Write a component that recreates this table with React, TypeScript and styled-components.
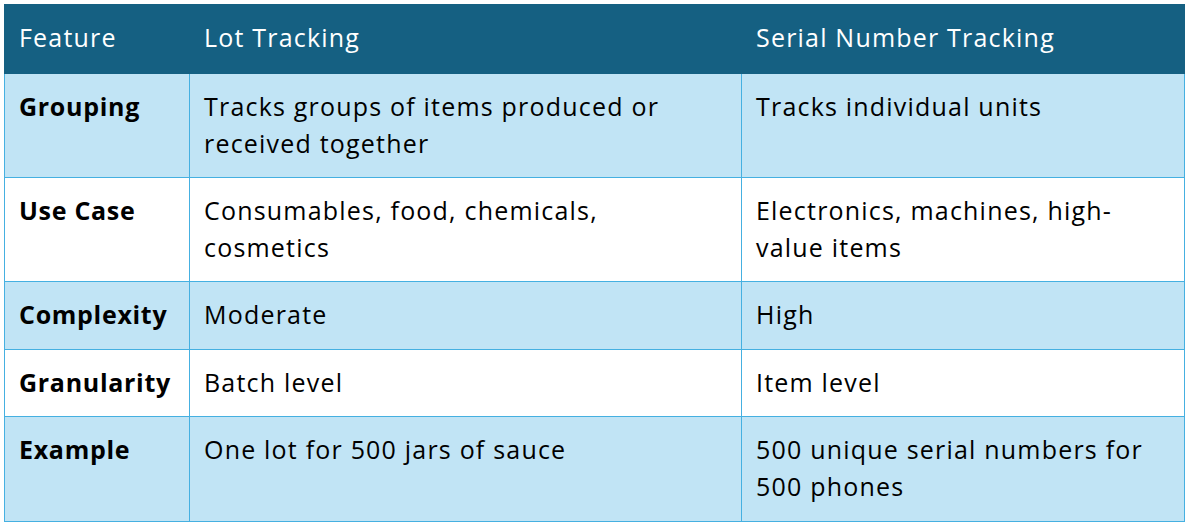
import React from "react";
import styled, { createGlobalStyle } from "styled-components";

const Global = createGlobalStyle`
  html, body { margin: 0; padding: 0; background: #ffffff; }
  body { font-family: "Open Sans", "Noto Sans", sans-serif; }
`;

const Page = styled.div`
  padding: 4px 2px 3px 4px;
`;

const Table = styled.table`
  width: 1180px;
  border-collapse: collapse;
  table-layout: fixed;
  font-family: "Open Sans", "Noto Sans", sans-serif;
  font-size: 25px;
  letter-spacing: 1.2px;
  line-height: 37px;
  color: #000000;
`;

const HeadRow = styled.tr`
  background: #156082;
  height: 68px;
`;

const HeadCell = styled.th`
  color: #ffffff;
  font-weight: 400;
  text-align: left;
  vertical-align: top;
  padding: 14px 12px 17px 14px;
  border: 1px solid #156082;
`;

const Row = styled.tr<{ $banded: boolean; $h: number }>`
  background: ${(p) => (p.$banded ? "#C1E4F5" : "#ffffff")};
  height: ${(p) => p.$h}px;
`;

const Cell = styled.td<{ $bold?: boolean }>`
  font-weight: ${(p) => (p.$bold ? 700 : 400)};
  letter-spacing: ${(p) => (p.$bold ? "0.7px" : "1.2px")};
  vertical-align: top;
  padding: 14px 12px 15px 14px;
  border: 1px solid #45B0E1;
`;

const rows: { f: string; lot: string; serial: string; h: number }[] = [
  { f: "Grouping", lot: "Tracks groups of items produced or received together", serial: "Tracks individual units", h: 104 },
  { f: "Use Case", lot: "Consumables, food, chemicals, cosmetics", serial: "Electronics, machines, high-value items", h: 104 },
  { f: "Complexity", lot: "Moderate", serial: "High", h: 68 },
  { f: "Granularity", lot: "Batch level", serial: "Item level", h: 67 },
  { f: "Example", lot: "One lot for 500 jars of sauce", serial: "500 unique serial numbers for 500 phones", h: 105 },
];

export default function App() {
  return (
    <Page>
      <Global />
      <Table>
        <colgroup>
          <col style={{ width: 185 }} />
          <col style={{ width: 552 }} />
          <col style={{ width: 443 }} />
        </colgroup>
        <thead>
          <HeadRow>
            <HeadCell>Feature</HeadCell>
            <HeadCell>Lot Tracking</HeadCell>
            <HeadCell>Serial Number Tracking</HeadCell>
          </HeadRow>
        </thead>
        <tbody>
          {rows.map((r, i) => (
            <Row key={r.f} $banded={i % 2 === 0} $h={r.h}>
              <Cell $bold>{r.f}</Cell>
              <Cell>{r.lot}</Cell>
              <Cell>{r.serial}</Cell>
            </Row>
          ))}
        </tbody>
      </Table>
    </Page>
  );
}
